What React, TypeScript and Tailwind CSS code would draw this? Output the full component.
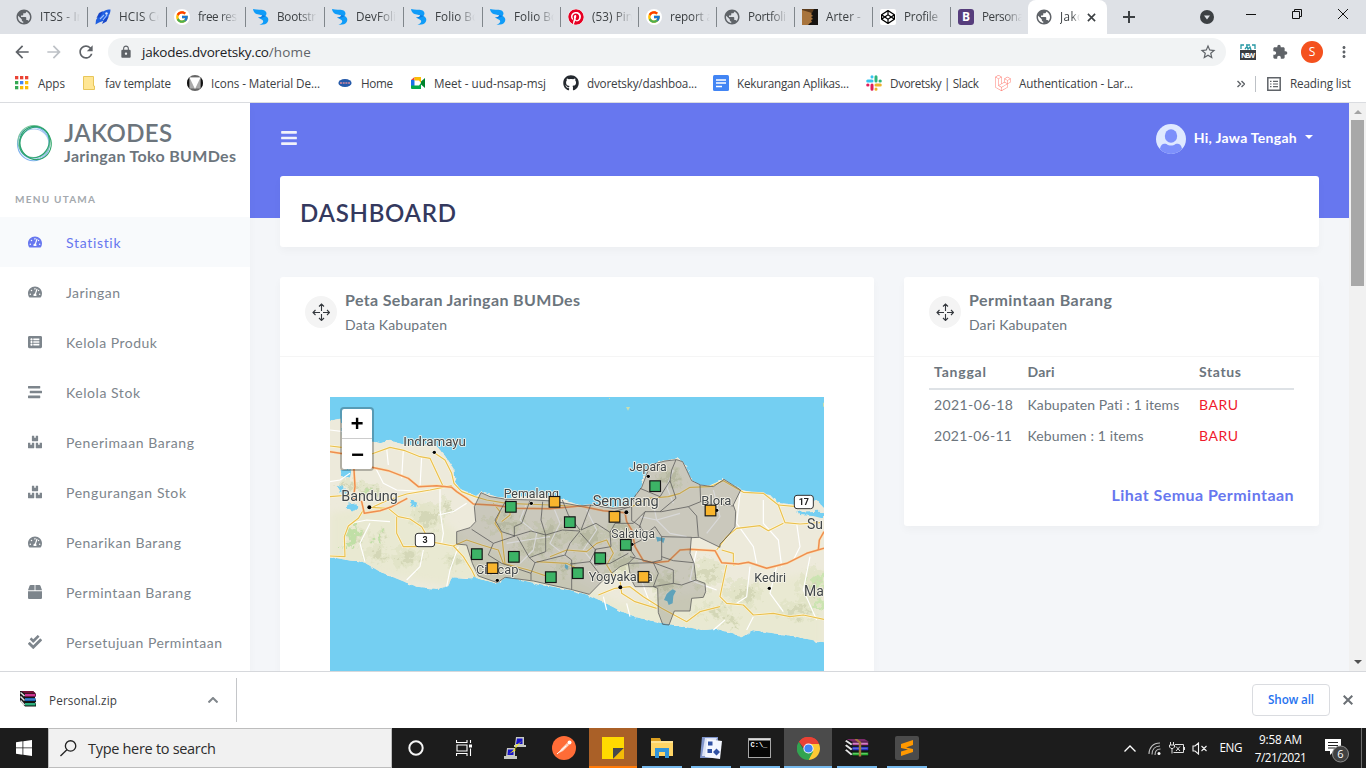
import { useLayoutEffect, useRef, useState, type ReactNode } from "react";
import {
  FaBars,
  FaBox,
  FaBoxes,
  FaCheckDouble,
  FaCodepen,
  FaGithub,
  FaLaravel,
  FaListAlt,
  FaPinterest,
  FaStream,
  FaTachometerAlt,
} from "react-icons/fa";
import { FcGoogle } from "react-icons/fc";
import { MdArrowBack, MdArrowForward, MdExtension, MdLock, MdMoreVert, MdPublic, MdRefresh, MdStarBorder } from "react-icons/md";

/* Single-line label whose letter spacing is adjusted to a given width. */
function Label({ w, children, className = "" }: { w: number; children: string; className?: string }) {
  const ref = useRef<HTMLSpanElement>(null);
  const [spacing, setSpacing] = useState(0);
  useLayoutEffect(() => {
    const el = ref.current;
    if (!el) return;
    el.style.letterSpacing = "0px";
    const natural = el.getBoundingClientRect().width;
    setSpacing((w - natural) / Math.max(1, children.length - 1));
    el.style.letterSpacing = `${(w - natural) / Math.max(1, children.length - 1)}px`;
  }, [w, children]);
  return (
    <span ref={ref} className={`inline-block w-max shrink-0 whitespace-pre ${className}`} style={{ letterSpacing: `${spacing}px` }}>
      {children}
    </span>
  );
}

/* ---------- Browser icons ---------- */

const Globe = () => <MdPublic className="size-[18px] -mx-px text-[#5f6368]" />;

const Folio = () => (
  <svg viewBox="0 0 16 16" className="size-4">
    <path d="M0 0C4 1 8 .3 11 1.300 14 2.500 14 5.500 12.500 7 15.500 8.200 16 11 14.500 13.300 13 15.500 10 16 6.500 15.700 10 14.500 11 12.500 9.500 11L5 8.500C8 8.300 9.500 7.300 9 6.300L3.500 5C1.500 4 .3 2.500 0 0Z" fill="#109cf8" />
    <path d="M7 5.800 9 6.300C9.500 7.300 8 8.300 5 8.500 8 9.500 10.500 8.500 12.500 7 11 6.300 9 6.500 7 5.800Z" fill="#0c7ce0" />
  </svg>
);

const Rocket = () => (
  <svg viewBox="0 0 16 16" className="size-4">
    <path d="M15.500.5C11 .5 7 2 3.500 7L1 11 .5 15.500 4 13.500 9.500 11.500C13 8.500 15.500 5 15.500.5Z" fill="#1f5fe0" />
    <path d="M8 2 4 4 1.500 9 5 8ZM14 7 9 10.500 7 15 11.500 12.500Z" fill="#1746c8" />
    <path d="M5 10 9 6M8 11 12 6" stroke="#9cc0ff" strokeWidth="1.100" />
    <circle cx="11.500" cy="4.500" r="1.200" fill="#dbe7ff" />
  </svg>
);

const GoogleIcon = () => (
  <span className="flex size-4 items-center justify-center rounded-full bg-white">
    <FcGoogle className="size-[14px]" />
  </span>
);

const Pin = () => <FaPinterest className="size-4 rounded-full bg-white text-[#e60023]" />;

const Book = () => (
  <svg viewBox="0 0 16 16" className="size-4">
    <rect width="16" height="16" fill="#171411" />
    <path d="M0 0 7 2 10 4 9 5 11 7 9 8 11 10 9 11 10 13 8 14 6 16 0 16Z" fill="#a8743c" />
    <path d="M0 0H12L10 4 0 1Z" fill="#5d3c1c" />
  </svg>
);

const CodepenIcon = () => (
  <span className="flex size-4 items-center justify-center rounded-[2px] bg-white">
    <FaCodepen className="size-[14px] text-black" />
  </span>
);

const BootstrapIcon = () => (
  <span className="flex size-4 items-center justify-center rounded-[3px] bg-[#563d7c] text-[12px] leading-none font-bold text-white">B</span>
);

const tabs: { title: string; icon: () => ReactNode; w: number }[] = [
  { title: "ITSS - In", icon: Globe, w: 44 },
  { title: "HCIS Ce", icon: Rocket, w: 44 },
  { title: "free res", icon: GoogleIcon, w: 39 },
  { title: "Bootstr", icon: Folio, w: 39 },
  { title: "DevFoli", icon: Folio, w: 40 },
  { title: "Folio Bo", icon: Folio, w: 44 },
  { title: "Folio Bo", icon: Folio, w: 44 },
  { title: "(53) Pin", icon: Pin, w: 41 },
  { title: "report a", icon: GoogleIcon, w: 43 },
  { title: "Portfoli", icon: Globe, w: 38 },
  { title: "Arter - ", icon: Book, w: 38 },
  { title: "Profile", icon: CodepenIcon, w: 34 },
  { title: "Persona", icon: BootstrapIcon, w: 42 },
];

function TabStrip() {
  return (
    <div className="flex h-[34px] shrink-0 bg-[#dee1e6] pl-2 text-[11.7px] text-[#3c4043]">
      {tabs.map((t, i) => (
        <div key={i} className={`flex h-full shrink-0 items-center pl-2 ${i < 6 ? "w-[79px]" : "w-[78px]"}`}>
          <t.icon />
          <span className="ml-2 w-10 shrink-0 overflow-hidden [mask-image:linear-gradient(to_right,black_55%,transparent)]">
            <Label w={t.w}>{t.title}</Label>
          </span>
          {i < 12 && <span className="-mr-px ml-auto h-5 w-px bg-[#80868b]" />}
        </div>
      ))}
      <div className="flex h-full w-[79px] shrink-0 items-center rounded-t-lg bg-white pl-2">
        <Globe />
        <span className="ml-2 w-5 overflow-hidden [mask-image:linear-gradient(to_right,black_60%,transparent)]">
          <Label w={24}>Jako</Label>
        </span>
        <svg viewBox="0 0 10 10" className="ml-[7px] size-[9px]" stroke="#3c4043" strokeWidth="1.800">
          <path d="M1 1 9 9M9 1 1 9" />
        </svg>
      </div>
      <svg viewBox="0 0 12 12" className="mt-[11px] ml-4 size-3 shrink-0" stroke="#3c4043" strokeWidth="2">
        <path d="M6 0V12M0 6H12" />
      </svg>
      <svg viewBox="0 0 14 14" className="mt-[10px] ml-[65px] size-[14px] shrink-0">
        <circle cx="7" cy="7" r="7" fill="#3c4043" />
        <path d="M4 5.500H10L7 9.500Z" fill="#dee1e6" />
      </svg>
      <svg viewBox="0 0 10 10" className="mt-[10px] ml-8 size-[10px] shrink-0" stroke="#111">
        <path d="M0 4.500H10" />
      </svg>
      <svg viewBox="0 0 10 10" className="mt-[9px] ml-9 size-[10px] shrink-0" stroke="#111" fill="none">
        <path d="M.5 2.500H7.500V9.500H.5ZM2.500 2.500V.5H9.500V7.500H7.500" />
      </svg>
      <svg viewBox="0 0 10 10" className="mt-[9px] ml-9 size-[10px] shrink-0" stroke="#111">
        <path d="M0 0 10 10M10 0 0 10" />
      </svg>
    </div>
  );
}

function Toolbar() {
  return (
    <div className="flex h-9 shrink-0 items-center pl-3 text-[#5f6368]">
      <MdArrowBack className="size-5" />
      <MdArrowForward className="ml-3 size-5 text-[#bdc1c6]" />
      <MdRefresh className="ml-3 size-5" />
      <div className="ml-3 flex h-7 w-[1118px] items-center rounded-full bg-[#f1f3f4] pl-[11px] text-[13.5px]">
        <MdLock className="size-[14px]" />
        <Label w={127} className="ml-[9px] text-[#202124]">jakodes.dvoretsky.co</Label>
        <Label w={42}>/home</Label>
        <MdStarBorder className="mr-[9px] ml-auto size-[18px]" />
      </div>
      <svg viewBox="0 0 16 16" className="ml-[14px] size-4">
        <path d="M1 5V1H4M6 1H10M12 1H15V5M5 5 7 2.500 8 5 10 3 11 6" fill="none" stroke="#2597a3" strokeWidth="1.300" />
        <rect y="6" width="16" height="10" fill="#3b3e42" />
        <text x="1" y="14" fontSize="7.500" fontWeight="bold" fill="#fff" textLength="14" fontFamily="Open Sans, sans-serif">NEW</text>
      </svg>
      <MdExtension className="ml-4 size-4" />
      <span className="ml-[13px] flex size-[22px] items-center justify-center rounded-full bg-[#f4511e] text-[12px] text-white">S</span>
      <MdMoreVert className="ml-3 size-[18px]" />
    </div>
  );
}

const bookmarks: { title: string; w: number; cell: string; icon: ReactNode }[] = [
  {
    title: "Apps", w: 27, cell: "w-[67px]",
    icon: (
      <svg viewBox="0 0 16 16" className="size-4">
        {["#ea4335", "#ea4335", "#ea4335", "#34a853", "#4285f4", "#fbbc05", "#34a853", "#fbbc05", "#fbbc05"].map((c, i) => (
          <rect key={i} x={1 + (i % 3) * 5} y={1 + Math.floor(i / 3) * 5} width="3.300" height="3.300" fill={c} />
        ))}
      </svg>
    ),
  },
  {
    title: "fav template", w: 66, cell: "w-[106px]",
    icon: (
      <svg viewBox="0 0 16 16" className="size-4">
        <path d="M2.500 1.500H12.500V11H13.500V14.500H2.500Z" fill="#ffe694" stroke="#e8c65a" />
      </svg>
    ),
  },
  {
    title: "Icons - Material De...", w: 109, cell: "w-[150px]",
    icon: (
      <svg viewBox="0 0 16 16" className="size-4">
        <circle cx="8" cy="8" r="8" fill="#666" />
        <path d="M2.500 2.200A8 8 0 0 0 2.500 13.800ZM13.500 2.200A8 8 0 0 1 13.500 13.800Z" fill="#111" />
        <path d="M2.500 2.500H13.500V13.500H2.500Z" fill="#aaa" />
        <path d="M2.500 2.500H13.500L8 14Z" fill="#fff" />
      </svg>
    ),
  },
  {
    title: "Home", w: 32, cell: "w-[73px]",
    icon: (
      <svg viewBox="0 0 16 16" className="size-4">
        <ellipse cx="8" cy="8" rx="6.600" ry="4" fill="#2459a9" />
        <path d="M3 8H13" stroke="#d58b9d" strokeWidth="1.500" strokeDasharray="2 .7" />
      </svg>
    ),
  },
  {
    title: "Meet - uud-nsap-msj", w: 112, cell: "w-[153px]",
    icon: (
      <svg viewBox="0 0 16 16" className="size-4">
        <path d="M1 5V13H4.500V5Z" fill="#1a73e8" />
        <path d="M1 5 4.500 2V5Z" fill="#ea4335" />
        <path d="M4.500 2H11V8L9 5.500H4.500Z" fill="#fbbc05" />
        <path d="M4.500 10.500H9L11 8V14H2Q1 14 1 13V10.500Z" fill="#00a94b" />
        <path d="M11 6.500 15 3V13L11 9.500Z" fill="#00832d" />
      </svg>
    ),
  },
  { title: "dvoretsky/dashboa...", w: 110, cell: "w-[150px]", icon: <FaGithub className="size-4 text-[#24292f]" /> },
  {
    title: "Kekurangan Aplikas...", w: 112, cell: "w-[153px]",
    icon: (
      <svg viewBox="0 0 16 16" className="size-4">
        <rect width="16" height="16" rx="1.500" fill="#4285f4" />
        <path d="M3 5H13M3 8H13M3 11.500H9" stroke="#fff" strokeWidth="1.600" />
      </svg>
    ),
  },
  {
    title: "Dvoretsky | Slack", w: 89, cell: "w-[129px]",
    icon: (
      <svg viewBox="0 0 16 16" className="size-4" fill="none" strokeWidth="3" strokeLinecap="round">
        <path d="M1.700 6H6M6 1.700V2" stroke="#36c5f0" />
        <path d="M10 1.700V6M14 6H14.300" stroke="#2eb67d" />
        <path d="M10 10H14.300M10 14V14.300" stroke="#ecb22e" />
        <path d="M6 10V14.300M1.700 10H2" stroke="#e01e5a" />
      </svg>
    ),
  },
  { title: "Authentication - Lar...", w: 114, cell: "w-[160px]", icon: <FaLaravel className="size-4 text-[#ff7a70]" /> },
];

function BookmarkBar() {
  return (
    <div className="flex h-[33px] shrink-0 items-center border-b border-[#dadce0] pb-[5px] pl-[14px] text-[11.7px] text-[#3c4043]">
      {bookmarks.map((b) => (
        <div key={b.title} className={`flex shrink-0 items-center ${b.cell}`}>
          {b.icon}
          <Label w={b.w} className="ml-2">{b.title}</Label>
        </div>
      ))}
      <svg viewBox="0 0 8 8" className="ml-[82px] size-2 shrink-0" fill="none" stroke="#5f6368" strokeWidth="1.400">
        <path d="M.5 1 3.500 4 .5 7M4.500 1 7.500 4 4.500 7" />
      </svg>
      <span className="ml-[10px] h-4 w-px bg-[#bdc1c6]" />
      <svg viewBox="0 0 14 14" className="ml-[11px] size-[14px]" fill="none" stroke="#5f6368" strokeWidth="1.500">
        <path d="M.8.8H13.200V13.200H.8Z" />
        <path d="M3 4.300H4.500M6 4.300H11M3 7H4.500M6 7H11M3 9.700H4.500M6 9.700H11" strokeWidth="1.200" />
      </svg>
      <Label w={61} className="ml-[9px]">Reading list</Label>
    </div>
  );
}

/* ---------- Page ---------- */

const menu = [
  { title: "Statistik", icon: FaTachometerAlt, w: 55 },
  { title: "Jaringan", icon: FaTachometerAlt, w: 54 },
  { title: "Kelola Produk", icon: FaListAlt, w: 91 },
  { title: "Kelola Stok", icon: FaStream, w: 74 },
  { title: "Penerimaan Barang", icon: FaBoxes, w: 128 },
  { title: "Pengurangan Stok", icon: FaBoxes, w: 120 },
  { title: "Penarikan Barang", icon: FaTachometerAlt, w: 115 },
  { title: "Permintaan Barang", icon: FaBox, w: 125 },
  { title: "Persetujuan Permintaan", icon: FaCheckDouble, w: 156 },
];

function Sidebar() {
  return (
    <aside className="z-10 flex w-[250px] shrink-0 flex-col bg-white shadow-[0_4px_8px_rgba(0,0,0,0.03)]">
      <div className="flex h-[81px] shrink-0 pt-4 pl-4 text-[#6c757d]">
        <svg viewBox="0 0 38 38" className="mt-[5px] size-[38px]" fill="none" strokeWidth="1.100">
          <ellipse cx="17.500" cy="20" rx="16" ry="16.800" stroke="#7db2ee" />
          <ellipse cx="18" cy="20" rx="15" ry="15" stroke="#a4c6ef" />
          <circle cx="18" cy="17.500" r="16" stroke="#7cc5a0" />
          <ellipse cx="19.500" cy="19" rx="15.500" ry="16.800" stroke="#2fa56a" transform="rotate(-25 19.500 19)" />
          <ellipse cx="18.500" cy="18.500" rx="14.200" ry="16" stroke="#2aa276" transform="rotate(35 18.500 18.500)" />
        </svg>
        <div className="ml-[10px] flex flex-col items-start">
          <Label w={108} className="text-[24px] leading-[28px] font-semibold">JAKODES</Label>
          <Label w={172} className="text-[16px] leading-[18px] font-bold">Jaringan Toko BUMDes</Label>
        </div>
      </div>
      <div className="h-[33px] shrink-0 pt-[8px] pl-[15px] text-[10px] leading-[15px] font-bold text-[#a4a9ae]">
        <Label w={80}>MENU UTAMA</Label>
      </div>
      {menu.map((m, i) => (
        <div
          key={m.title}
          className={`flex h-[50px] shrink-0 items-center pl-[27px] text-[14px] ${i === 0 ? "bg-[#f8fafc] text-[#6777ef]" : "text-[#7d858c]"}`}
        >
          <span className="flex w-4 justify-center">
            <m.icon className="size-[14px]" />
          </span>
          <Label w={m.w} className="ml-[23px]">{m.title}</Label>
        </div>
      ))}
    </aside>
  );
}

const roads = {
  orange: [
    "M30 185 60 190 100 195 102 240 105 290 100 325 125 335 133 370 180 362 215 350 262 325",
    "M155 232 205 242 265 265 295 290 350 287 395 292 410 305 440 325 460 342 525 346 590 355 690 356 780 348 850 362 915 368 920 395 935 420 945 470 970 512 1000 518 1045 514 1080 480 1110 478 1185 482 1205 518 1255 522 1285 517 1340 535 1400 520 1460 490 1512 475",
    "M1495 480 1498 450 1512 425",
  ],
  yellow: [
    "M30 168 65 172M155 192 210 172 255 182 300 200 330 205 370 290M345 190 375 210 395 250 402 280 425 305 465 320 500 330 560 340 690 345 790 350",
    "M30 320 90 315M160 350 205 330 260 312 330 300 395 287M150 352 205 355 235 380 270 387 305 410 330 455 400 468 440 450 485 465 535 480 550 520 625 540 700 565",
    "M130 360 115 385 85 408 73 440 75 500 30 498M230 380 230 430 250 470 290 470M400 468 430 500 455 540 465 560",
    "M520 340 540 365 525 400 545 430 550 480 555 520M570 345 570 375 545 395",
    "M690 500 740 480 800 485 830 460 860 450 880 490 860 525 885 565M780 540 740 520 650 515",
    "M935 350 985 325 1045 320 1080 310 1110 292 1170 290 1210 272 1270 307 1330 310 1375 345 1395 398 1440 402 1500 398",
    "M1190 480 1220 440 1250 415 1320 407 1345 422 1390 400M1220 525 1200 620 1220 640 1270 645 1300 675 1360 670 1410 680 1450 675 1512 688",
    "M835 615 885 595 930 590 970 620 1025 655 1100 695 1140 665 1200 650M900 570 905 610 945 635 1010 655",
    "M1205 480 1240 490 1240 525 1290 517M1375 345 1430 350",
  ],
  white: [
    "M200 175 205 225M250 180 245 265M165 230 190 280 230 300 320 305M305 200 300 290M360 290 360 360 370 430 365 460M30 120 70 125",
    "M150 400 120 460 135 515M310 480 300 530 260 570M415 470 390 540 380 590M440 340 400 365 355 375M90 250 60 270 30 275M90 400 140 390 210 395",
    "M620 340 600 390 650 430 640 480 600 520M700 350 720 400 690 460 740 500M560 460 620 450 690 440M800 360 830 420 790 480 830 530",
    "M1000 340 1010 390 1050 430 1100 440M960 380 1010 390 1080 370M1060 240 1040 290 1060 340M1180 300 1200 380 1160 430",
    "M1260 310 1250 400 1300 470 1310 520M1330 330 1330 400 1375 450 1385 530M1430 400 1440 470 1420 510M1290 530 1280 620 1250 640M1370 530 1350 610 1390 665M1470 500 1450 600 1490 690",
    "M1130 480 1110 570 1190 600M1215 690 1180 720M1300 680 1280 720M850 620 860 660M920 640 930 680M960 560 990 640",
  ],
};

const districts =
  "M560 328 525 390 545 425 585 438 520 460 455 418M630 332 605 400 583 410 583 438 633 423 677 435 677 485 628 503 592 440M520 460 505 495 545 520 633 550 633 570M633 550 645 518 628 503M645 518 735 495 755 510 755 598M668 335 663 390 677 435 727 420 780 423 750 460 735 495M727 330 745 375 780 420M812 345 783 420 828 400 870 427 873 470 825 478 780 428M828 478 810 515 750 522M825 478 825 525 870 520 925 490M810 515 845 560 865 575M870 427 885 400 940 400 975 365 1025 365 1105 350 1130 378 1135 440M885 395 882 365 932 350M935 350 935 392 962 410 965 450 925 470 945 500 925 520M975 365 958 412 980 430 1005 410 1025 440 1115 442M1025 440 1025 510 995 517 930 500M925 520 1000 518 1060 540 1060 580 1000 590M1060 580 1085 585 1128 570M1025 500 1060 512 1120 518M960 295 1020 320 1050 272 1068 325 1020 365M1050 272 1055 240 1068 209M1140 285 1142 335 1105 350M1142 335 1240 348M1000 518 1015 550 1000 590";

const outline =
  "M483 308 510 320 560 328 640 330 700 333 780 348 812 345 880 355 932 350 945 318 965 292 985 240 1000 222 1035 213 1070 209 1088 215 1100 240 1115 272 1142 285 1180 290 1212 268 1262 300 1240 345 1247 365 1245 410 1222 440 1200 462 1200 472 1138 442 1114 443 1110 490 1122 520 1128 570 1155 580 1157 605 1150 622 1115 625 1110 663 1063 663 1047 705 1028 703 1015 668 1013 595 1000 590 945 590 932 565 925 520 900 530 850 570 808 613 752 598 640 573 555 562 532 578 475 558 457 520 440 465 410 462 410 425 450 413 467 395 463 350Z";

const land =
  "M30 92 62 86 66 150 160 155 180 160 210 152 245 162 300 168 345 163 375 198 400 235 403 270 415 295 440 305 465 320 483 306 530 320 560 325 640 316 700 318 745 335 780 346 812 343 880 352 930 345 960 300 985 235 1000 222 1035 211 1070 208 1090 215 1115 272 1142 284 1180 287 1212 266 1262 299 1310 310 1350 315 1372 338 1430 345 1490 330 1512 355V757L1450 745 1420 738 1350 728 1297 720 1265 742 1240 730 1190 716 1150 720 1095 710 1050 703 1015 697 955 683 900 662 850 635 805 615 750 600 640 578 560 560 532 580 475 566 462 556 455 565 395 562 385 588 350 597 290 590 240 570 180 545 130 515 80 510 30 500Z";

const hills = [
  [140, 300, 40, 22], [100, 440, 30, 30], [180, 440, 25, 18], [320, 380, 50, 40], [260, 500, 50, 28], [170, 490, 34, 30],
  [375, 350, 22, 25], [90, 285, 35, 18], [560, 400, 60, 30], [690, 430, 70, 35], [800, 440, 55, 35], [900, 430, 45, 45],
  [1050, 260, 40, 28], [900, 520, 50, 40], [1160, 550, 50, 45], [1270, 610, 55, 40], [1430, 660, 55, 30], [1480, 590, 45, 60],
  [1030, 580, 45, 40], [1180, 660, 50, 22], [640, 470, 60, 30], [740, 530, 40, 25], [1230, 690, 30, 18], [400, 510, 30, 25],
];

const cities: [string, number, number, number, number, number, number, number][] = [
  ["Indramayu", 250, 167, 188, 39, 343, 187, 5],
  ["Bandung", 64, 333, 169, 43, 148, 352, 6],
  ["Pemalang", 551, 323, 166, 37, 634, 340, 5],
  ["Cilacap", 468, 551, 127, 38, 532, 571, 5],
  ["Jepara", 928, 242, 112, 37, 985, 259, 5],
  ["Semarang", 818, 347, 198, 43, 919, 367, 6],
  ["Blora", 1144, 344, 90, 38, 1190, 361, 5],
  ["Salatiga", 874, 444, 131, 36, 936, 463, 5],
  ["Yogyakarta", 806, 573, 192, 39, 901, 592, 6],
  ["Kediri", 1303, 576, 95, 38, 1348, 595, 5],
];

const pins: [number, number, string][] = [
  [572, 350, "#3cb366"], [749, 396, "#3cb366"], [470, 492, "#3cb366"], [581, 500, "#3cb366"], [692, 561, "#3cb366"],
  [773, 549, "#3cb366"], [840, 504, "#3cb366"], [917, 464, "#3cb366"], [1005, 288, "#3cb366"],
  [703, 335, "#f9b52d"], [517, 534, "#f9b52d"], [883, 380, "#f9b52d"], [1171, 361, "#f9b52d"], [970, 560, "#f9b52d"],
];

function RegionMap() {
  return (
    <svg viewBox="30 21 1482 822" className="h-[274px] w-[494px]">
      <defs>
        <clipPath id="land"><path d={land} /></clipPath>
        <filter id="soft" x="-50%" y="-50%" width="200%" height="200%"><feGaussianBlur stdDeviation="11" /></filter>
        <filter id="coast"><feTurbulence type="fractalNoise" baseFrequency="0.05" numOctaves="3" /><feDisplacementMap in="SourceGraphic" scale="18" xChannelSelector="R" yChannelSelector="G" /></filter>
        <filter id="rough"><feTurbulence type="fractalNoise" baseFrequency="0.05" numOctaves="4" /><feDisplacementMap in="SourceGraphic" scale="75" xChannelSelector="R" yChannelSelector="G" /></filter>
      </defs>
      <rect x="30" y="21" width="1482" height="822" fill="#74cff2" />
      <path d={land} fill="#edeadb" filter="url(#coast)" />
      <path d={land} fill="#edeadb" />
      <g clipPath="url(#land)">
        <g filter="url(#soft)">
          <path d="M30 370 300 330 460 470 700 540 900 640 1200 600 1512 540V780L1100 740 600 620 30 530Z" fill="#e8e9cf" opacity=".8" />
        </g>
        <g filter="url(#rough)">
          {hills.map(([x, y, rx, ry], i) => (
            <g key={i}>
              <ellipse cx={x} cy={y} rx={rx} ry={ry} fill="#dde1c2" opacity=".6" />
              <ellipse cx={x + 5} cy={y + 3} rx={rx * 0.55} ry={ry * 0.5} fill="#c8ccaa" opacity=".55" />
            </g>
          ))}
          <path d="M85 420 110 410 115 450 95 480 80 465ZM170 430 190 440 185 465 165 455ZM140 295 160 300 145 312 130 308Z" fill="#c0dfa6" />
          <path d="M1465 565 1512 555V585L1490 590ZM1490 640 1512 635V665L1495 660Z" fill="#cbe4b1" />
        </g>
      </g>
      <g fill="#74cff2" filter="url(#coast)">
        <path d="M62 240 95 238 90 262 65 262ZM50 285 75 290 78 312 62 305ZM82 345 110 340 112 355 95 365 80 358ZM272 328 292 335 288 352 275 348Z" />
        <path d="M1435 365 1500 362 1512 370V386L1480 378 1440 375Z" />
      </g>
      <g fill="none" strokeLinejoin="round">
        {roads.white.map((d) => <path key={d} d={d} stroke="#fff" strokeWidth="3.500" />)}
        {roads.yellow.map((d) => <path key={d} d={d} stroke="#fff7dc" strokeWidth="7" />)}
        {roads.yellow.map((d) => <path key={d} d={d} stroke="#e9c04f" strokeWidth="3.500" />)}
        {roads.orange.map((d) => <path key={d} d={d} stroke="#fce3b6" strokeWidth="8" />)}
        {roads.orange.map((d) => <path key={d} d={d} stroke="#ee8e50" strokeWidth="4.500" />)}
      </g>
      <g fill="#62b9d8">
        <path d="M1040 612 1050 603 1058 598 1068 603 1060 618 1058 640 1046 645 1042 634 1032 630ZM1008 440 1035 445 1030 460 1022 452 1012 455ZM735 522 745 528 742 540 734 532Z" />
      </g>
      <path d={outline} fill="#555" fillOpacity=".23" stroke="#555" strokeOpacity=".75" strokeWidth="3" />
      <path d={districts} fill="none" stroke="#555" strokeOpacity=".75" strokeWidth="3" />
      <path d="M918 51H930L924 62ZM1509 38H1512V50H1509ZM867 24H870V27H867Z" fill="#c9dfb1" />
      <g fontFamily="Roboto, sans-serif" fill="#414649" stroke="#f6f4ea" strokeWidth="5" paintOrder="stroke" strokeLinejoin="round">
        {cities.map(([name, x, y, w, size, cx, cy, r]) => (
          <g key={name}>
            <text x={x} y={y} fontSize={size} textLength={w} lengthAdjust="spacingAndGlyphs">{name}</text>
            <circle cx={cx} cy={cy} r={r} fill="#000" stroke="#fff" strokeWidth="2" />
          </g>
        ))}
        <text x="1461" y="418" fontSize="42">Su</text>
        <text x="1452" y="619" fontSize="42">Ma</text>
      </g>
      {[["3", 286, 430, 58], ["17", 1423, 316, 57]].map(([n, x, y, w]) => (
        <g key={n}>
          <rect x={x} y={y} width={w} height="40" rx="8" fill="#fff" stroke="#333" strokeWidth="3" />
          <text x={Number(x) + Number(w) / 2} y={Number(y) + 29} textAnchor="middle" fontSize="27" fontWeight="bold" fontFamily="Roboto, sans-serif" fill="#222">{n}</text>
        </g>
      ))}
      {pins.map(([x, y, c]) => (
        <rect key={`${x}-${y}`} x={x - 15.5} y={y - 15.5} width="32" height="32" fill={c} stroke="#151515" strokeWidth="3.500" />
      ))}
    </svg>
  );
}

const MoveBadge = () => (
  <span className="flex size-8 shrink-0 items-center justify-center rounded-full bg-[#f4f4f4]">
    <svg viewBox="0 0 18 18" className="size-[18px]" fill="none" stroke="#34383d" strokeWidth="1.100">
      <path d="M9.500 1V8M9.500 11V17.500M1 9.500H8M11 9.500H17.500M7 3.500 9.500 1 12 3.500M7 15 9.500 17.500 12 15M3.500 7 1 9.500 3.500 12M15 7 17.500 9.500 15 12" />
    </svg>
  </span>
);

function CardHeader({ title, tw, sub, sw }: { title: string; tw: number; sub: string; sw: number }) {
  return (
    <div className="flex h-20 border-b border-[#f5f5f5] pt-[19px] pl-[25px] text-[#6c757d]">
      <MoveBadge />
      <div className="-mt-[5px] ml-2 flex flex-col items-start">
        <Label w={tw} className="text-[16px] leading-[18px] font-bold">{title}</Label>
        <Label w={sw} className="mt-[6px] text-[14px] leading-5">{sub}</Label>
      </div>
    </div>
  );
}

const card = "rounded-[3px] bg-white shadow-[0_4px_8px_rgba(0,0,0,0.03)]";
const tableRow = "grid grid-cols-[93.5px_171.5px_1fr] items-center pl-[5px]";

function Dashboard() {
  return (
    <main className="flex min-w-0 flex-1 flex-col overflow-hidden bg-[linear-gradient(#6777ef_0,#6777ef_115px,#f4f6f9_115px)] px-[30px]">
      <header className="flex h-[73px] shrink-0 items-center text-white">
        <FaBars className="mb-[3px] size-[18px] text-[#f2f2fa]" />
        <svg viewBox="0 0 30 30" className="mr-2 mb-[2px] ml-auto size-[30px]">
          <clipPath id="avatar"><circle cx="15" cy="15" r="15" /></clipPath>
          <g clipPath="url(#avatar)">
            <rect width="30" height="30" fill="#dfe9ff" />
            <ellipse cx="15" cy="12" rx="6.200" ry="6.800" fill="#7d90fb" />
            <path d="M4 25C5 19.500 8 19.500 10.500 20 13 22 17 22 19.500 20 22 19.500 25 19.500 26 25L24 30H6Z" fill="#7d90fb" />
          </g>
        </svg>
        <Label w={103} className="mb-[4px] text-[14px] font-bold">Hi, Jawa Tengah</Label>
        <svg viewBox="0 0 8 4" className="mr-[6px] mb-[5px] ml-2 h-1 w-2" fill="#fff"><path d="M0 0H8L4 4Z" /></svg>
      </header>
      <section className={`flex h-[71px] shrink-0 items-center pt-[2px] pl-5 text-[#34395e] ${card}`}>
        <Label w={156} className="text-[24px] leading-7 font-semibold">DASHBOARD</Label>
      </section>
      <div className="mt-[30px] flex items-start gap-[30px]">
        <section className={`h-[450px] w-[594px] shrink-0 ${card}`}>
          <CardHeader title="Peta Sebaran Jaringan BUMDes" tw={235} sub="Data Kabupaten" sw={102} />
          <div className="relative mt-10 ml-[50px] w-[494px]">
            <RegionMap />
            <div className="absolute top-[10px] left-[10px] w-[34px] rounded-[4px] border-2 border-black/25 bg-white bg-clip-padding font-['Liberation_Mono',monospace] text-[22px] font-bold text-black">
              <div className="flex h-[30px] items-center justify-center border-b border-[#ccc] pt-1">+</div>
              <div className="flex h-[30px] items-center justify-center pt-1 pl-px">−</div>
            </div>
          </div>
        </section>
        <section className={`h-[249px] w-[415px] shrink-0 ${card}`}>
          <CardHeader title="Permintaan Barang" tw={143} sub="Dari Kabupaten" sw={98} />
          <div className="px-[25px] text-[14px] text-[#6c757d]">
            <div className={`h-[33px] border-b-2 border-[#dee2e6] pb-[2px] text-[14px] font-bold ${tableRow}`}>
              <Label w={52}>Tanggal</Label>
              <Label w={27}>Dari</Label>
              <Label w={42}>Status</Label>
            </div>
            <div className={`h-[31px] pb-[3px] ${tableRow}`}>
              <Label w={79}>2021-06-18</Label>
              <Label w={152}>Kabupaten Pati : 1 items</Label>
              <Label w={39} className="text-[#ef1a2d]">BARU</Label>
            </div>
            <div className={`h-[31px] pb-[3px] ${tableRow}`}>
              <Label w={78}>2021-06-11</Label>
              <Label w={116}>Kebumen : 1 items</Label>
              <Label w={39} className="text-[#ef1a2d]">BARU</Label>
            </div>
            <div className="mt-[31px] flex justify-end text-[16px] leading-6 font-bold text-[#6777ef]">
              <Label w={182}>Lihat Semua Permintaan</Label>
            </div>
          </div>
        </section>
      </div>
    </main>
  );
}

function Scrollbar() {
  return (
    <div className="flex w-[17px] shrink-0 flex-col items-center bg-[#f1f1f1]">
      <svg viewBox="0 0 8 4" className="mt-[7px] h-1 w-2 shrink-0" fill="#a3a3a3"><path d="M0 4H8L4 0Z" /></svg>
      <div className="mt-[6px] h-[166px] w-[13px] bg-[#a8a8a8]" />
      <svg viewBox="0 0 8 4" className="mt-auto mb-[7px] h-1 w-2 shrink-0" fill="#505050"><path d="M0 0H8L4 4Z" /></svg>
    </div>
  );
}

/* ---------- Desktop chrome ---------- */

function BooksIcon({ className, belt = false }: { className: string; belt?: boolean }) {
  return (
    <svg viewBox="0 0 16 16" preserveAspectRatio="none" className={className}>
      <path d="M0 0H13L16 3V5.500H15V8L16 9V11L15 11.500 16 13V15.500H5L0 10Z" fill="#151515" />
      <path d="M1 0H13L16 2.500H5Z" fill={belt ? "#7c2a6b" : "#711136"} />
      <path d="M5 3H15.500V5.500H5Z" fill={belt ? "#b64da3" : "#c61b82"} />
      <path d="M5 7H15.500V10H5Z" fill={belt ? "#2633c8" : "#1864b4"} />
      <path d="M5 12H15.500V14.500H5Z" fill={belt ? "#22b02c" : "#14a56c"} />
      <path d="M.5 1.500 4.500 5M.5 5.500 4.500 9.500M.5 9.500 4.500 14" stroke="#e3e3e3" strokeWidth="1.500" />
      <path d="M5 4H15M5 8.300H15M5 13H15" stroke="#ffffff66" strokeWidth=".6" />
      {belt && <path d="M7 0 10 3V15.500" stroke="#a5793a" strokeWidth="1.600" fill="none" />}
    </svg>
  );
}

function DownloadBar() {
  return (
    <div className="flex h-[57px] shrink-0 items-center border-t border-[#d6d8dc] bg-white pl-5 text-[11.7px] text-[#3c4043]">
      <BooksIcon className="mb-[3px] size-4" />
      <Label w={68} className="mt-px ml-[13px]">Personal.zip</Label>
      <svg viewBox="0 0 10 6" className="ml-[91px] h-[6px] w-[10px]" fill="none" stroke="#80868b" strokeWidth="2"><path d="M.5 5.500 5 1 9.500 5.500" /></svg>
      <span className="ml-[18px] h-11 w-px bg-[#c4c6c9]" />
      <span className="mr-[13px] mb-px ml-auto flex h-8 w-[78px] items-center justify-center rounded border border-[#dadce0] font-semibold text-[#2672ef]">
        <Label w={46}>Show all</Label>
      </span>
      <svg viewBox="0 0 10 10" className="mr-[13px] size-[10px]" stroke="#6b7075" strokeWidth="2"><path d="M.7.7 9.300 9.300M9.300.7.7 9.300" /></svg>
    </div>
  );
}

const taskIcons: { icon: ReactNode; cell: string; bar?: string }[] = [
  { cell: "w-[48px]", icon: <svg viewBox="0 0 16 16" className="size-4"><circle cx="8" cy="8" r="6.700" fill="none" stroke="#f5f5f5" strokeWidth="2" /></svg> },
  {
    cell: "w-[48px]",
    icon: (
      <svg viewBox="0 0 16 16" className="size-4" fill="none" stroke="#fff" strokeWidth="1.100">
        <path d="M.5 0V3M.5 2.500H11M11 0V3M1 5H11V11H1ZM.5 16V13M.5 13.500H11M11 13V16M14.500 0V3M14.500 8.500V16" /><path d="M13 4.500H16V7.500H13Z" fill="#fff" stroke="none" />
      </svg>
    ),
  },
  {
    cell: "w-[52px]",
    icon: (
      <svg viewBox="0 0 22 22" className="ml-px size-[22px]">
        <path d="M12 0H20V8H22V10H10V8H11Z" fill="#c7c9c5" /><path d="M13 1.500H18.500V7H12Z" fill="#1713ca" />
        <path d="M3 11H11V19H13V22H0V19H2Z" fill="#c7c9c5" /><path d="M4 12.500H9.500V18H3.500Z" fill="#1713ca" />
        <path d="M18 4 11 9 13 10 5 17 12 13 10 12Z" fill="#f7ee19" />
      </svg>
    ),
  },
  {
    cell: "w-[49px]",
    icon: (
      <svg viewBox="0 0 24 24" className="-ml-px size-6">
        <circle cx="12" cy="12" r="12" fill="#ff6c37" />
        <path d="M7 17 9 13 15 7 17 9 11 15Z" fill="#ffd2bf" /><circle cx="17.500" cy="6.500" r="2" fill="#fff" /><path d="M5 18 14 10" stroke="#fff" />
      </svg>
    ),
  },
  {
    cell: "w-[48px] bg-[#aa6027]", bar: "w-full bg-[#ff7a08]",
    icon: <svg viewBox="0 0 22 22" className="size-[22px]"><path d="M0 0H22V11L11 22H0Z" fill="#ffda00" /><path d="M11 11H22L11 22Z" fill="#46484c" /><path d="M22 11V22H11Z" fill="#f3bb07" /></svg>,
  },
  {
    cell: "w-[49px]", bar: "w-10 bg-[#76b9ed]",
    icon: (
      <svg viewBox="0 0 22 20" className="h-5 w-[22px]">
        <path d="M0 1H9L10 3H22V18H0Z" fill="#ffd565" /><path d="M0 0H9L10 3H0Z" fill="#dc9f20" /><path d="M4 10H18V20H14V14H8V20H4Z" fill="#3295da" /><path d="M0 3H22V5H0Z" fill="#ffe392" />
      </svg>
    ),
  },
  {
    cell: "w-[49px]", bar: "w-10 bg-[#76b9ed]",
    icon: (
      <svg viewBox="0 0 24 24" className="size-6">
        <path d="M3 1H19V22H1Z" fill="#8095cb" /><path d="M6 2H18L10 20H3Z" fill="#dce3f6" /><path d="M8 3 23 5 21 23 6 21Z" fill="#f4f7ff" />
        <path d="M9 5.500H13.500V9.500H9ZM8.500 13H13V17H8.500ZM17.500 12.500 21 16 17.500 19.500 14 16Z" fill="#3152a4" />
      </svg>
    ),
  },
  {
    cell: "w-[49px]", bar: "w-10 bg-[#76b9ed]",
    icon: (
      <svg viewBox="0 0 24 20" className="h-5 w-6">
        <rect x=".5" y=".5" width="22" height="19" fill="#060606" stroke="#a7a7a7" /><path d="M1 1.500H22" stroke="#ddd" strokeWidth="2" />
        <text x="2.500" y="9" fontSize="7" fontWeight="bold" fill="#fff" fontFamily="Liberation Mono, monospace">C:\_</text>
      </svg>
    ),
  },
  {
    cell: "w-[48px] bg-[#4b4b4b]", bar: "w-full bg-[#76b9ed]",
    icon: (
      <svg viewBox="0 0 24 24" className="size-[23px]">
        <path d="M12 12 2.300 5A12 12 0 0 1 23 7.200H12Z" fill="#e94235" /><path d="M12 12H17L12 24A12 12 0 0 0 23 7.200H12Z" fill="#fcc934" />
        <path d="M12 12 7.200 14 2 5A12 12 0 0 0 12 24L17 15Z" fill="#32a451" /><path d="M2 5A12 12 0 0 1 22.800 7H12V12H7.500Z" fill="#e94235" />
        <circle cx="12" cy="12" r="5.300" fill="#fff" /><circle cx="12" cy="12" r="4.300" fill="#4285f4" />
      </svg>
    ),
  },
  { cell: "w-[50px]", bar: "w-10 bg-[#76b9ed]", icon: <BooksIcon className="h-[18px] w-6" belt /> },
  {
    cell: "w-[49px]", bar: "w-10 bg-[#76b9ed]",
    icon: (
      <svg viewBox="0 0 24 24" className="size-6">
        <rect width="24" height="24" rx="2" fill="#4b4b4b" /><path d="M6 8 18 4V9L11 11.500 18 13V16L6 20V15.500L13 13.500 6 12Z" fill="#ff9800" />
      </svg>
    ),
  },
];

function Taskbar() {
  return (
    <div className="flex h-10 shrink-0 items-center bg-[#1c1c1c] text-white">
      <div className="flex w-12 shrink-0 justify-center">
        <svg viewBox="0 0 16 16" className="size-4" fill="#fff"><path d="M0 2.200 6.500 1.300V7.500H0ZM7.300 1.200 16 0V7.500H7.300ZM0 8.300H6.500V14.700L0 13.800ZM7.300 8.300H16V16L7.300 14.800Z" /></svg>
      </div>
      <div className="flex h-full w-[344px] shrink-0 items-center border border-[#bdbdbd] bg-[#f1f1f1] pl-[11px] text-[14.5px] text-[#2c2c2c]">
        <svg viewBox="0 0 18 18" className="size-[17px]" fill="none" stroke="#222" strokeWidth="1.400"><circle cx="11.200" cy="6.300" r="5.500" /><path d="M7.300 10.300.5 17" /></svg>
        <Label w={128} className="mt-[2px] ml-[11px]">Type here to search</Label>
      </div>
      {taskIcons.map((t, i) => (
        <div key={i} className={`flex h-full shrink-0 flex-col items-center ${t.cell}`}>
          <div className="flex flex-1 items-center pt-[2px]">{t.icon}</div>
          <span className={`h-[2px] ${t.bar ?? "w-full"}`} />
        </div>
      ))}
      <svg viewBox="0 0 12 7" className="ml-auto h-[7px] w-3" fill="none" stroke="#fff" strokeWidth="1.300"><path d="M.5 6.500 6 1 11.500 6.500" /></svg>
      <svg viewBox="0 0 13 13" className="ml-3 size-[13px]" fill="none" stroke="#bfbfbf" strokeWidth="1.100">
        <path d="M1 12C1 5.500 5 1 12 1M4 12.500C4 7.500 7 4 12 4M7 13C7 9 9 7 12.500 7" /><circle cx="11" cy="11.500" r="1.500" fill="#fff" stroke="none" />
      </svg>
      <svg viewBox="0 0 16 12" className="ml-2 h-3 w-4" fill="none" stroke="#e0e0e0" strokeWidth="1">
        <path d="M1.500 0V3M4.500 0V3M.5 3H5.500V5L4 6.500H2L.5 5ZM3 6V11.500M6 2.500H14.500V10.500H4.500M15.500 5V8M7 4.500 11 9M11 4.500 7 9" />
      </svg>
      <svg viewBox="0 0 16 13" className="ml-[7px] h-[13px] w-4" fill="none" stroke="#f1f1f1" strokeWidth="1.100"><path d="M6.500 1V12L3 9H1V4H3ZM9.500 4 14.500 9M14.500 4 9.500 9" /></svg>
      <Label w={23} className="ml-[11px] text-[11.7px]">ENG</Label>
      <div className="ml-3 flex h-full w-[53px] flex-col items-center pt-[2px] text-[11.7px] leading-[18px]">
        <Label w={43}>9:58 AM</Label>
        <Label w={52}>7/21/2021</Label>
      </div>
      <svg viewBox="0 0 26 26" className="mt-[5px] ml-[18px] size-[26px]">
        <path d="M0 1H16V13H9L5 17V13H0Z" fill="#fff" /><path d="M3 4.500H13M3 7.500H13M3 10H10" stroke="#222" strokeWidth="1.100" />
        <circle cx="15.500" cy="16" r="8" fill="#414141" stroke="#8d8d8d" /><text x="15.500" y="20" textAnchor="middle" fontSize="11" fill="#fff" fontFamily="Open Sans, sans-serif">6</text>
      </svg>
      <span className="mr-1 ml-[10px] h-full w-px bg-[#6d6d6d]" />
    </div>
  );
}

export default function App() {
  return (
    <div className="flex h-[768px] w-[1366px] flex-col overflow-hidden bg-white font-['Open_Sans',sans-serif]">
      <TabStrip />
      <Toolbar />
      <BookmarkBar />
      <div className="flex h-[568px] shrink-0 overflow-hidden font-['Lato',sans-serif]">
        <Sidebar />
        <Dashboard />
        <Scrollbar />
      </div>
      <DownloadBar />
      <Taskbar />
    </div>
  );
}
